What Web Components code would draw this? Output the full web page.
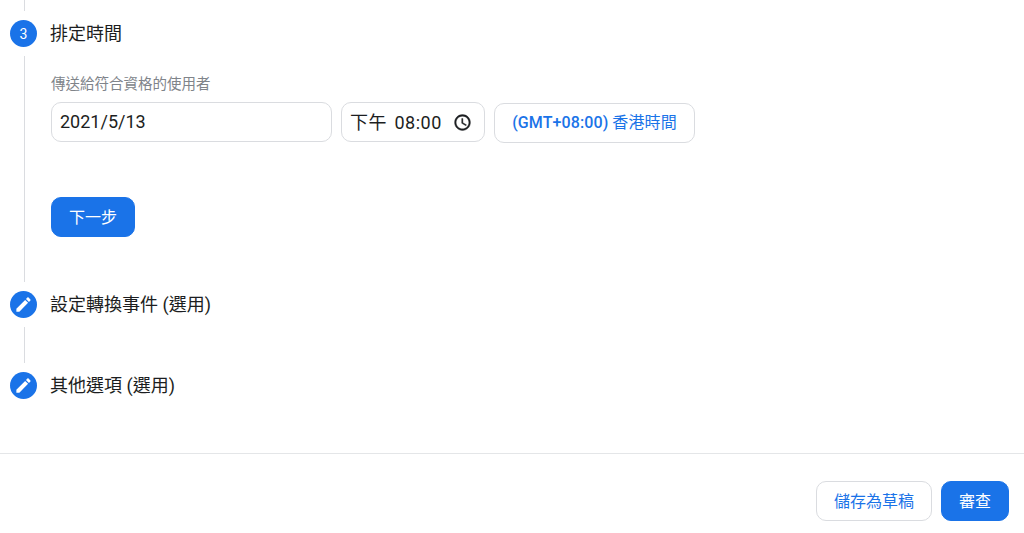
<!DOCTYPE html>
<html lang="zh-Hant">
<head>
<meta charset="utf-8">
<title>排定時間</title>
<style>
  html, body { margin: 0; height: 533px; overflow: hidden; background: #fff; }
  body {
    font-family: Roboto, "Noto Sans CJK TC", sans-serif;
    color: #1c1e21;
  }
</style>
</head>
<body>
<template id="step-item-template">
  <style>
    :host { display: grid; grid-template-columns: 27px 1fr; column-gap: 14px; }
    .rail { display: flex; flex-direction: column; align-items: center; }
    .dot {
      flex: none; width: 27px; height: 27px; border-radius: 50%;
      background: #1a73e8; color: #fff; font-size: 14px; font-weight: 400;
      display: flex; align-items: center; justify-content: center;
    }
    .dot svg { width: 19px; height: 19px; fill: #fff; }
    .line { flex: 1; width: 1px; margin: 9px 0 9px 2px; background: #dadce0; }
    :host([last]) .line { visibility: hidden; }
    .title { font-size: 18px; line-height: 27px; height: 27px; margin-left: -1px; }
  </style>
  <div class="rail">
    <div class="dot"></div>
    <div class="line"></div>
  </div>
  <div class="content">
    <div class="title"></div>
    <slot></slot>
  </div>
</template>

<template id="field-box-template">
  <style>
    :host {
      display: flex; align-items: center; justify-content: space-between;
      box-sizing: border-box; height: 40px; padding: 0 8px 2px;
      border: 1px solid #dadce0; border-radius: 10px; background: #fff;
      font-size: 18px; color: #1c1e21;
    }
    ::slotted(svg) { width: 19px; height: 19px; margin-top: 2px; fill: #1c1e21; stroke: #1c1e21; stroke-width: .5; flex: none; }
  </style>
  <slot></slot>
</template>

<template id="action-button-template">
  <style>
    :host {
      display: inline-flex; align-items: center; justify-content: center;
      box-sizing: border-box; height: 40px; padding-bottom: 2px; border-radius: 10px;
      font-size: 16px; background: #1a73e8; color: #fff; border: 1px solid #1a73e8;
    }
    :host([outline]) { background: #fff; color: #1a73e8; border-color: #dadce0; }
  </style>
  <slot></slot>
</template>

<template id="schedule-page-template">
  <style>
    :host { display: flex; flex-direction: column; height: 533px; }
    .steps { display: flex; flex-direction: column; padding-left: 10px; height: 453px; flex: none; }
    .stub { width: 1px; height: 11px; margin: 0 0 9px 14px; background: #dadce0; }
    .schedule { height: 271px; }
    .later { height: 81px; }
    .last { height: 81px; }
    .label { margin-top: 27px; font-size: 14.5px; line-height: 22px; color: #80848a; }
    .fields { display: flex; margin-top: 6px; }
    .date { width: 281px; }
    .time { width: 144px; margin-left: 9px; padding-right: 12px; letter-spacing: .5px; word-spacing: 2.5px; }
    .tz {
      width: 201px; margin: 1px 0 0 9px; padding-bottom: 4px; justify-content: center;
      color: #1a73e8; font-size: 16px; letter-spacing: .1px;
    }
    .tz b { font-weight: 500; margin-right: 4px; }
    .next { width: 84px; margin-top: 54px; }
    footer {
      flex: 1; border-top: 1px solid #e4e6e8;
      display: flex; justify-content: flex-end; align-items: flex-start;
      gap: 9px; padding: 27px 15px 0 0;
    }
    .save { width: 116px; }
    .review { width: 68px; }
  </style>
  <div class="steps">
    <div class="stub"></div>
    <step-item class="schedule" number="3" title-text="排定時間">
      <div class="label">傳送給符合資格的使用者</div>
      <div class="fields">
        <field-box class="date">2021/5/13</field-box>
        <field-box class="time">
          <span>下午 08:00</span>
          <svg viewBox="0 0 24 24"><path d="M11.99 2C6.47 2 2 6.48 2 12s4.47 10 9.99 10C17.52 22 22 17.52 22 12S17.52 2 11.99 2zM12 20c-4.42 0-8-3.58-8-8s3.58-8 8-8 8 3.58 8 8-3.58 8-8 8zm.5-13H11v6l5.25 3.15.75-1.23-4.5-2.67z"/></svg>
        </field-box>
        <field-box class="tz"><span><b>(GMT+08:00)</b>香港時間</span></field-box>
      </div>
      <action-button class="next">下一步</action-button>
    </step-item>
    <step-item class="later" title-text="設定轉換事件 (選用)"></step-item>
    <step-item class="last" last title-text="其他選項 (選用)"></step-item>
  </div>
  <footer>
    <action-button class="save" outline>儲存為草稿</action-button>
    <action-button class="review">審查</action-button>
  </footer>
</template>

<schedule-page></schedule-page>

<script>
const PENCIL = '<svg viewBox="0 0 24 24"><path d="M3 17.25V21h3.75L17.81 9.94l-3.75-3.75L3 17.25zM20.71 7.04c.39-.39.39-1.02 0-1.41l-2.34-2.34c-.39-.39-1.02-.39-1.41 0l-1.83 1.83 3.75 3.75 1.83-1.83z"/></svg>';

// all four elements just clone their template into an open shadow root
class TemplatedElement extends HTMLElement {
  constructor() {
    super();
    const tpl = document.getElementById(this.constructor.templateId);
    this.attachShadow({ mode: 'open' }).appendChild(tpl.content.cloneNode(true));
  }
}

class StepItem extends TemplatedElement {
  static get templateId() { return 'step-item-template'; }
  connectedCallback() {
    const number = this.getAttribute('number');
    const dot = this.shadowRoot.querySelector('.dot');
    if (number) {
      dot.textContent = number;
    } else {
      dot.innerHTML = PENCIL;
    }
    this.shadowRoot.querySelector('.title').textContent = this.getAttribute('title-text');
  }
}

class FieldBox extends TemplatedElement {
  static get templateId() { return 'field-box-template'; }
}

class ActionButton extends TemplatedElement {
  static get templateId() { return 'action-button-template'; }
}

class SchedulePage extends TemplatedElement {
  static get templateId() { return 'schedule-page-template'; }
}

customElements.define('step-item', StepItem);
customElements.define('field-box', FieldBox);
customElements.define('action-button', ActionButton);
customElements.define('schedule-page', SchedulePage);
</script>
</body>
</html>
